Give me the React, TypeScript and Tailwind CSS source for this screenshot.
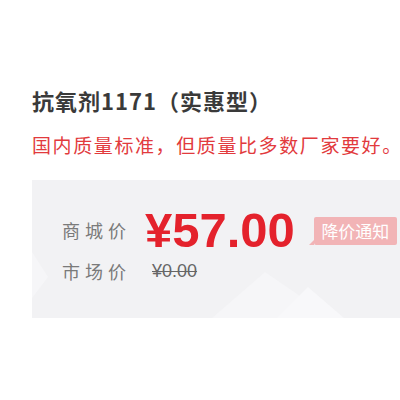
import React from "react";

const cjk = { fontFamily: '"Noto Sans CJK SC", "Noto Sans", sans-serif' };
const num = { fontFamily: '"Liberation Sans", "Noto Sans CJK SC", sans-serif' };

export default function App() {
  return (
    <div className="w-[400px] h-[400px] overflow-hidden bg-white" style={cjk}>
      <div className="pt-[82px] pl-[32px]">
        <h1 className="text-[22px] leading-[36px] font-bold text-[#3a3a3a] whitespace-nowrap tracking-[1px]">
          抗氧剂1171（实惠型）
        </h1>
        <p className="mt-[14px] text-[19px] leading-[26px] text-[#e23a3d] whitespace-nowrap tracking-[1.6px]">
          国内质量标准，但质量比多数厂家要好。
        </p>
        <div className="relative mt-[22px] h-[138px] w-[420px] bg-[#f2f2f4]">
          <svg
            className="absolute inset-0"
            width="420"
            height="138"
            viewBox="0 0 420 138"
          >
            <polygon points="0,72 16,97 0,118" fill="#f6f6f8" />
            <polygon points="180,138 233,92 300,138" fill="#f6f6f8" />
            <polygon points="245,138 276,107 312,138" fill="#f8f8fa" />
          </svg>
          <div className="relative flex flex-col pl-[30px] pt-[30px]">
            <div className="flex items-center h-[40px]">
              <span className="w-[83px] text-[18px] tracking-[5px] text-[#7a7a7a]">商城价</span>
              <span
                className="text-[49px] leading-[40px] font-bold text-[#e4222c]"
                style={num}
              >
                ¥57.00
              </span>
              <span className="relative ml-[19px] mt-[2px] h-[28px] w-[83px] flex items-center justify-center rounded-[2px] bg-[#f2b4b6] text-[17px] text-white">
                降价通知
                <span className="absolute left-[-5px] bottom-0 w-0 h-0 border-l-[5px] border-l-transparent border-b-[5px] border-b-[#f2b4b6]" />
              </span>
            </div>
            <div className="flex items-center h-[30px] mt-[6px]">
              <span className="w-[90px] text-[18px] tracking-[5px] text-[#7a7a7a]">市场价</span>
              <span className="text-[18px] text-[#666] line-through" style={num}>
                ¥0.00
              </span>
            </div>
          </div>
        </div>
      </div>
    </div>
  );
}
